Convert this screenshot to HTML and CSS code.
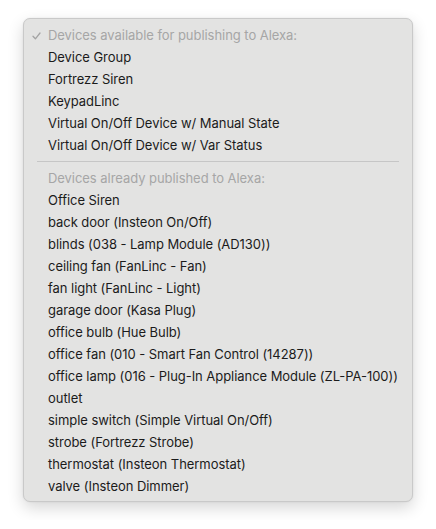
FILE: index.html
```html
<!DOCTYPE html>
<html>
<head>
    <title>Publish to Alexa</title>
    <link rel="stylesheet" href="styles.css">
</head>
<body>
    <div class="menu">
        <div class="item header">
            <svg class="check" width="9" height="8" viewBox="0 0 9 8"><path d="M1 4.2 L3.4 6.8 L8 1" fill="none" stroke="#a3a3a3" stroke-width="1.3" stroke-linecap="round" stroke-linejoin="round"/></svg>
            Devices available for publishing to Alexa:
        </div>
        <div class="item">Device Group</div>
        <div class="item">Fortrezz Siren</div>
        <div class="item">KeypadLinc</div>
        <div class="item">Virtual On/Off Device w/ Manual State</div>
        <div class="item">Virtual On/Off Device w/ Var Status</div>

        <div class="separator"></div>

        <div class="item header">Devices already published to Alexa:</div>
        <div class="item">Office Siren</div>
        <div class="item">back door (Insteon On/Off)</div>
        <div class="item">blinds (038 - Lamp Module (AD130))</div>
        <div class="item">ceiling fan (FanLinc - Fan)</div>
        <div class="item">fan light (FanLinc - Light)</div>
        <div class="item">garage door (Kasa Plug)</div>
        <div class="item">office bulb (Hue Bulb)</div>
        <div class="item">office fan (010 - Smart Fan Control (14287))</div>
        <div class="item">office lamp (016 - Plug-In Appliance Module (ZL-PA-100))</div>
        <div class="item">outlet</div>
        <div class="item">simple switch (Simple Virtual On/Off)</div>
        <div class="item">strobe (Fortrezz Strobe)</div>
        <div class="item">thermostat (Insteon Thermostat)</div>
        <div class="item">valve (Insteon Dimmer)</div>
    </div>
</body>
</html>
```

FILE: styles.css
```css
* {
    margin: 0;
    padding: 0;
    box-sizing: border-box;
}

body {
    background: #ffffff;
    padding: 18px 23px;
    font-family: 'Inter', 'Liberation Sans', sans-serif;
    font-size: 13px;
}

.menu {
    width: 390px;
    padding: 5px 0 4px;
    background: #e3e3e2;
    border: 1px solid #c9c9c9;
    border-radius: 7px;
    box-shadow: 0 6px 16px rgba(0, 0, 0, 0.16), 0 0 2px rgba(0, 0, 0, 0.08);
}

.item {
    position: relative;
    height: 22px;
    line-height: 22px;
    padding-left: 24px;
    color: #1b1b1b;
    letter-spacing: -0.05px;
    white-space: nowrap;
}

.header {
    color: #a6a6a6;
}

.check {
    position: absolute;
    left: 8px;
    top: 8px;
}

.separator {
    height: 1px;
    margin: 5px 13px;
    background: #c6c6c6;
}
```
